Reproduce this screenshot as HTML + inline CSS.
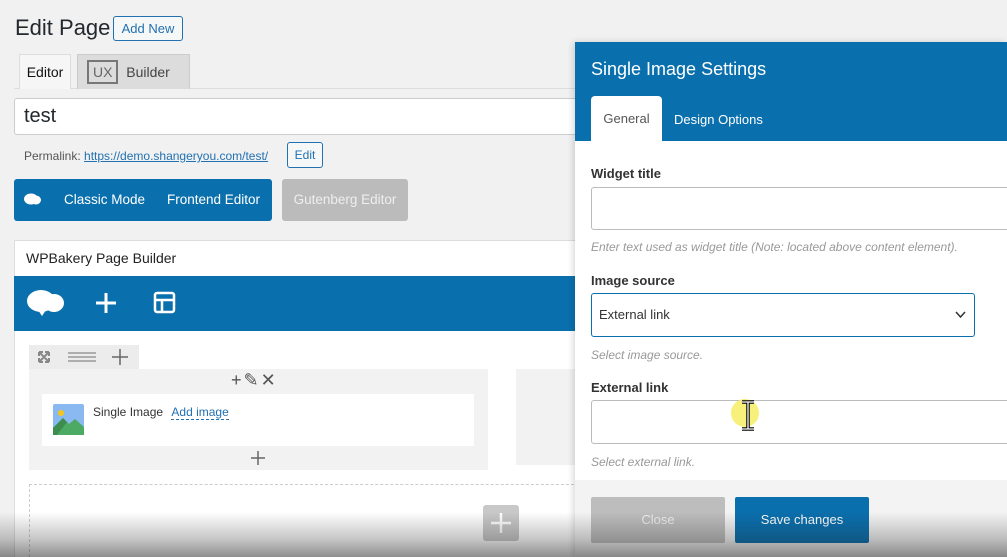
<!DOCTYPE html>
<html><head><meta charset="utf-8">
<style>
*{box-sizing:border-box;margin:0;padding:0}
html,body{width:1007px;height:557px;overflow:hidden}
body{background:#f1f1f1;font-family:"Liberation Sans",sans-serif;position:relative;color:#23282d}
.abs{position:absolute}
</style></head><body>
<div class="abs" style="left:15px;top:15px;font-size:22px;color:#23282d">Edit Page</div>
<div class="abs" style="left:113px;top:16px;width:70px;height:25px;border:1px solid #2271b1;border-radius:3px;color:#2271b1;font-size:13px;text-align:center;line-height:23px;background:#f6f7f7">Add New</div>
<div class="abs" style="left:14px;top:88px;width:570px;height:1px;background:#ddd"></div>
<div class="abs" style="left:19px;top:54px;width:52px;height:35px;background:#f6f6f6;border:1px solid #ddd;border-bottom:none;font-size:14px;line-height:34px;text-align:center;color:#111">Editor</div>
<div class="abs" style="left:77px;top:54px;width:113px;height:35px;background:#dcdcdc;border:1px solid #ccc;border-bottom:none;font-size:14px;line-height:34px;color:#444"><span style="display:inline-block;margin-left:9px;border:2px solid #777;padding:0 4px;line-height:20px;height:24px;color:#666">UX</span> &nbsp;Builder</div>
<div class="abs" style="left:14px;top:98px;width:580px;height:37px;background:#fff;border:1px solid #ccc;border-radius:3px;font-size:20px;padding:6px 9px">test</div>
<div class="abs" style="left:24px;top:149px;font-size:12px;color:#555">Permalink: <span style="color:#2271b1;text-decoration:underline">https://demo.shangeryou.com/test/</span></div>
<div class="abs" style="left:287px;top:142px;width:36px;height:26px;border:1px solid #2271b1;border-radius:3px;color:#2271b1;font-size:12px;line-height:24px;text-align:center;background:#f6f7f7">Edit</div>
<div class="abs" style="left:14px;top:179px;width:258px;height:42px;background:#0a6fad;border-radius:3px;color:#fff;font-size:13.5px;line-height:42px">
<svg class="abs" style="left:10px;top:14px" width="18" height="13" viewBox="0 0 18 13"><ellipse cx="7" cy="6" rx="7" ry="5.5" fill="#fff"/><ellipse cx="12" cy="7" rx="5" ry="4.5" fill="#fff"/></svg>
<span class="abs" style="left:50px">Classic Mode</span><span class="abs" style="left:153px">Frontend Editor</span></div>
<div class="abs" style="left:282px;top:179px;width:126px;height:42px;background:#bbb;border-radius:3px;color:#eee;font-size:13.5px;line-height:42px;text-align:center">Gutenberg Editor</div>
<div class="abs" style="left:14px;top:240px;width:570px;height:320px;background:#fff;border:1px solid #ddd"></div>
<div class="abs" style="left:26px;top:250px;font-size:14px;color:#222">WPBakery Page Builder</div>
<div class="abs" style="left:14px;top:276px;width:570px;height:55px;background:#0a6fad"></div>
<svg class="abs" style="left:26px;top:288px" width="40" height="30" viewBox="0 0 40 30"><ellipse cx="15" cy="13" rx="14" ry="11" fill="#fff"/><ellipse cx="28" cy="15" rx="10" ry="9" fill="#fff"/><path d="M12 22 L16 28 L20 22Z" fill="#fff"/></svg>
<svg class="abs" style="left:94px;top:291px" width="24" height="24"><path d="M12 2V22M2 12H22" stroke="#fff" stroke-width="3"/></svg>
<svg class="abs" style="left:153px;top:291px" width="24" height="24"><rect x="2" y="2" width="19" height="19" rx="2" fill="none" stroke="#fff" stroke-width="2.5"/><path d="M2 9H21M9 9V21" stroke="#fff" stroke-width="2.5"/></svg>
<div class="abs" style="left:29px;top:345px;width:110px;height:24px;background:#ececec"></div>
<svg class="abs" style="left:36px;top:349px" width="16" height="16"><path d="M3 3L13 13M13 3L3 13M3 3h4M3 3v4M13 13h-4M13 13v-4M13 3h-4M13 3v4M3 13h4M3 13v-4" stroke="#888" stroke-width="2" fill="none"/></svg>
<svg class="abs" style="left:67px;top:351px" width="30" height="12"><path d="M1 2H29M1 6H29M1 10H29" stroke="#999" stroke-width="1.5"/></svg>
<svg class="abs" style="left:111px;top:348px" width="18" height="18"><path d="M9 1V17M1 9H17" stroke="#666" stroke-width="1.5"/></svg>
<div class="abs" style="left:29px;top:369px;width:459px;height:101px;background:#f2f2f2"></div>
<div class="abs" style="left:231px;top:370px;font-size:18px;color:#555;letter-spacing:2px">+✎✕</div>
<div class="abs" style="left:42px;top:394px;width:432px;height:52px;background:#fff"></div>
<svg class="abs" style="left:53px;top:404px" width="31" height="31"><rect width="31" height="31" rx="2" fill="#8ab8f0"/><circle cx="8" cy="9" r="3" fill="#f5c518"/><path d="M0 31V24L10 14L16 20L22 15L31 23V31Z" fill="#4caa64"/><path d="M0 31V24L10 14L14 18L4 31Z" fill="#3d8c50"/></svg>
<div class="abs" style="left:93px;top:405px;font-size:12px;color:#333">Single Image <span style="color:#2271b1;border-bottom:1px dashed #2271b1;margin-left:5px">Add image</span></div>
<svg class="abs" style="left:250px;top:450px" width="16" height="16"><path d="M8 1V15M1 8H15" stroke="#666" stroke-width="1.5"/></svg>
<div class="abs" style="left:516px;top:369px;width:70px;height:96px;background:#f2f2f2"></div>
<div class="abs" style="left:29px;top:484px;width:560px;height:73px;border-top:1px dashed #ccc;border-left:1px dashed #ccc"></div>
<div class="abs" style="left:483px;top:505px;width:36px;height:36px;background:#c8c8c8;border-radius:3px"><svg width="36" height="36"><path d="M18 8V28M8 18H28" stroke="#fff" stroke-width="2.5"/></svg></div>

<div class="abs" style="left:575px;top:42px;width:432px;height:515px;background:#fff;box-shadow:-2px 0 6px rgba(0,0,0,.15)"></div>
<div class="abs" style="left:575px;top:42px;width:432px;height:99px;background:#0a6fad"></div>
<div class="abs" style="left:591px;top:59px;font-size:18px;color:#fff">Single Image Settings</div>
<div class="abs" style="left:591px;top:96px;width:71px;height:46px;background:#fff;border-radius:4px 4px 0 0;font-size:13px;color:#555;text-align:center;line-height:46px">General</div>
<div class="abs" style="left:674px;top:112px;font-size:13px;color:#fff">Design Options</div>
<div class="abs" style="left:591px;top:166px;font-size:13px;color:#333;font-weight:600">Widget title</div>
<div class="abs" style="left:591px;top:187px;width:420px;height:43px;border:1px solid #bbb;border-radius:3px"></div>
<div class="abs" style="left:591px;top:240px;font-size:12px;color:#999;font-style:italic">Enter text used as widget title (Note: located above content element).</div>
<div class="abs" style="left:591px;top:273px;font-size:13px;color:#333;font-weight:600">Image source</div>
<div class="abs" style="left:591px;top:293px;width:384px;height:44px;border:1.5px solid #0a6fad;border-radius:3px;font-size:13px;color:#333;line-height:42px;padding-left:7px">External link<svg class="abs" style="right:8px;top:17px" width="11" height="8"><path d="M1 1L5.5 6L10 1" stroke="#333" stroke-width="1.5" fill="none"/></svg></div>
<div class="abs" style="left:591px;top:348px;font-size:12px;color:#999;font-style:italic">Select image source.</div>
<div class="abs" style="left:591px;top:380px;font-size:13px;color:#333;font-weight:600">External link</div>
<div class="abs" style="left:591px;top:400px;width:420px;height:44px;border:1px solid #bbb;border-radius:3px"></div>
<div class="abs" style="left:731px;top:399px;width:28px;height:28px;border-radius:50%;background:#f7f07a"></div>
<svg class="abs" style="left:740px;top:400px" width="16" height="31"><path d="M2 2H14M8 2V29M2 29H14" stroke="#000" stroke-width="3.5"/><path d="M2 2H14M8 2V29M2 29H14" stroke="#fff" stroke-width="1.3"/></svg>
<div class="abs" style="left:591px;top:455px;font-size:12px;color:#999;font-style:italic">Select external link.</div>
<div class="abs" style="left:575px;top:480px;width:432px;height:77px;background:#f3f3f3"></div>
<div class="abs" style="left:591px;top:497px;width:134px;height:46px;background:#bdbdbd;border-radius:2px;color:#eee;font-size:13px;text-align:center;line-height:46px">Close</div>
<div class="abs" style="left:735px;top:497px;width:134px;height:46px;background:#0a6fad;border-radius:2px;color:#fff;font-size:13px;text-align:center;line-height:46px">Save changes</div>
<div class="abs" style="left:0;top:512px;width:1007px;height:45px;background:linear-gradient(to bottom,rgba(30,30,30,0),rgba(30,30,30,.25) 60%,rgba(30,30,30,.5))"></div>
</body></html>
